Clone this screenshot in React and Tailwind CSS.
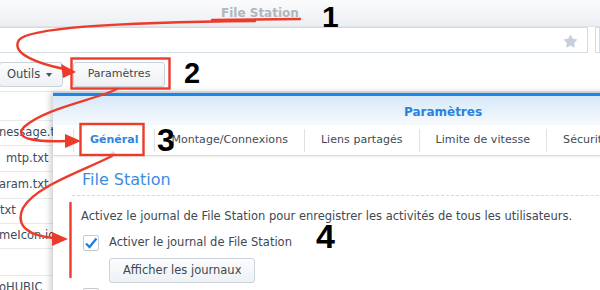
import { Star } from "lucide-react";

const files = [
  { h: 25, name: "" },
  { h: 25, name: "nessage.txt", off: "-ml-[1px]" },
  { h: 26, name: "mtp.txt", off: "ml-[6px]" },
  { h: 27, name: "aram.txt", off: "-ml-[1px]" },
  { h: 25, name: "txt", off: "ml-[0px]" },
  { h: 25, name: "meIcon.ico", off: "-ml-[1px]" },
  { h: 27, name: "" },
  { h: 25, name: "oHUBIC", off: "-ml-[1px]" },
];

const tabs = ["Général", "Montage/Connexions", "Liens partagés", "Limite de vitesse", "Sécurité"];

// Annotation overlay: red boxes, arrows and step numbers
const Annotations = () => (
  <>
    <svg className="absolute inset-0 pointer-events-none" width="600" height="290" viewBox="0 0 600 290">
      <g fill="none" stroke="#ec3a2b" strokeWidth="2.4" strokeLinecap="round">
        {/* underline under title */}
        <path d="M212 20 L300 19" />
        {/* arrow 1 */}
        <path d="M255 21 C140 22 30 26 19 40 C10 54 40 64 64 69" />
        {/* arrow 2 */}
        <path d="M117 89 C95 100 45 108 24 127 C12 140 40 142 67 141" />
        {/* arrow 3 */}
        <path d="M112 156 C85 170 35 186 23 208 C14 228 32 236 54 238" />
        {/* red boxes */}
        <rect x="71.5" y="58.5" width="98" height="30" />
        <rect x="80.5" y="124" width="63" height="31" />
        {/* red bar next to option */}
        <path d="M70.5 203 L70.5 277" />
      </g>
      <g fill="#ec3a2b">
        <path d="M76 72 L61 64 L63 78 Z" />
        <path d="M81 141 L65 134 L65 148 Z" />
        <path d="M68 239 L52 232 L52 246 Z" />
      </g>
    </svg>
    <div className="absolute left-[322px] top-[-1px] text-[30px] font-bold text-black font-['Liberation_Sans',sans-serif] leading-none pt-[3px]">1</div>
    <div className="absolute left-[184px] top-[57px] text-[29px] font-bold text-black font-['Liberation_Sans',sans-serif] leading-none pt-[2px]">2</div>
    <div className="absolute left-[157px] top-[122px] text-[32px] font-bold text-black font-['Liberation_Sans',sans-serif] leading-none pt-[2px]">3</div>
    <div className="absolute left-[316px] top-[217px] text-[34px] font-bold text-black font-['Liberation_Sans',sans-serif] leading-none pt-[2px]">4</div>
  </>
);

// Settings dialog laid over the File Station window
const SettingsDialog = () => (
  <div className="absolute left-[53px] top-[92px] w-[780px] h-[210px] bg-white border-t border-[#c9cfd5] shadow-[-3px_0_6px_rgba(0,0,0,0.18)]">
    <div className="border-t-[3px] border-[#1c87e6]">
      <div className="h-[29px] bg-gradient-to-b from-[#d7e8f9] to-[#f7fafd] flex items-center justify-center">
        <span className="text-[12px] font-bold text-[#2783dc] pt-[3px]">Paramètres</span>
      </div>
      {/* tab bar */}
      <div className="relative h-[31px] bg-white border-b border-[#d6dce2] shadow-[0_1px_2px_rgba(0,0,0,0.08)] flex items-center pl-[20px]">
        {tabs.map((t, i) => (
          <div
            key={t}
            className={`h-[23px] flex items-center px-[16px] border-l border-[#dde2e7] text-[11px] ${
              i === 0 ? "font-bold text-[#2b86de]" : "text-[#404b57] tracking-[0.05px]"
            }`}
          >
            {t}
          </div>
        ))}
        <div className="absolute left-[55px] bottom-[-1px] w-0 h-0 border-x-[5px] border-x-transparent border-b-[5px] border-b-[#d6dce2]" />
      </div>
      {/* body */}
      <div className="pl-[19px] pt-[12px]">
        <div className="border-b border-dashed border-[#d3d9df] pb-[3px] pl-[10px]">
          <span className="text-[16px] leading-[20px] text-[#3a8de2]">File Station</span>
        </div>
        <div className="pl-[9px] pt-[13px] text-[11.5px] text-[#3e4852] leading-[14px]">
          Activez le journal de File Station pour enregistrer les activités de tous les utilisateurs.
        </div>
        <div className="pl-[11px] pt-[11px] flex items-center gap-[10px]">
          <div className="w-[16px] h-[16px] rounded-[2px] border border-[#c3cad2] bg-white flex items-center justify-center">
            <svg width="14" height="14" viewBox="0 0 14 14">
              <path d="M2 7.5 L5.5 11 L12.5 2.5" fill="none" stroke="#1b7fe0" strokeWidth="2.2" />
            </svg>
          </div>
          <span className="text-[11.5px] text-[#3e4852]">Activer le journal de File Station</span>
        </div>
        <div className="pl-[37px] pt-[6px]">
          <button className="h-[25px] px-[13px] rounded-[3px] border border-[#cbd2d9] bg-gradient-to-b from-[#fbfcfd] to-[#eef1f4] text-[11.5px] text-[#3e4852]">
            Afficher les journaux
          </button>
        </div>
        <div className="pl-[11px] pt-[5px]">
          <div className="w-[16px] h-[16px] rounded-[2px] border border-[#c3cad2] bg-white" />
        </div>
      </div>
    </div>
  </div>
);

export default function App() {
  return (
    <div className="relative w-[600px] h-[290px] overflow-hidden bg-white font-['DejaVu_Sans',sans-serif] text-[#404b57]">
      {/* window title bar */}
      <div className="h-[27px] bg-gradient-to-b from-[#fbfcfd] to-[#eceff2] border-b border-[#dfe3e8] flex items-center pl-[221px]">
        <span className="text-[12px] font-bold text-[#b0b6bd]">File Station</span>
      </div>
      {/* address row */}
      <div className="flex h-[26px] gap-[7px]">
        <div className="w-[589px] -ml-px border border-[#d3dbe3] flex items-center justify-end pr-[9px]">
          <Star size={15} className="text-[#c6cfd9] mt-[2px]" fill="#c6cfd9" strokeWidth={1} />
        </div>
        <div className="flex-1 border border-[#d3dbe3]" />
      </div>
      {/* toolbar */}
      <div className="h-[39px] pt-[9px] flex gap-[10px] border-b border-[#e3e7eb]">
        <button className="w-[64px] -ml-px h-[25px] pl-[7px] flex items-center gap-[6px] rounded-[3px] border border-[#cbd2d9] bg-gradient-to-b from-[#fbfcfd] to-[#eef1f4] text-[11.5px] text-[#3e4852]">
          Outils
          <span className="w-0 h-0 border-x-[3px] border-x-transparent border-t-[4px] border-t-[#4a5560]" />
        </button>
        <button className="w-[92px] h-[25px] rounded-[3px] border border-[#cbd2d9] bg-gradient-to-b from-[#fbfcfd] to-[#eef1f4] text-[11px] text-[#3e4852]">
          Paramètres
        </button>
      </div>
      {/* file list (left column) */}
      <div className="w-[53px] overflow-hidden pt-[4px]">
        {files.map((f, i) => (
          <div
            key={i}
            style={{ height: f.h }}
            className="border-b border-[#e6e9ed] flex items-center whitespace-nowrap text-[11.5px] text-[#3d4b5b]"
          >
            <span className={f.off}>{f.name}</span>
          </div>
        ))}
      </div>
      <SettingsDialog />
      <Annotations />
    </div>
  );
}
